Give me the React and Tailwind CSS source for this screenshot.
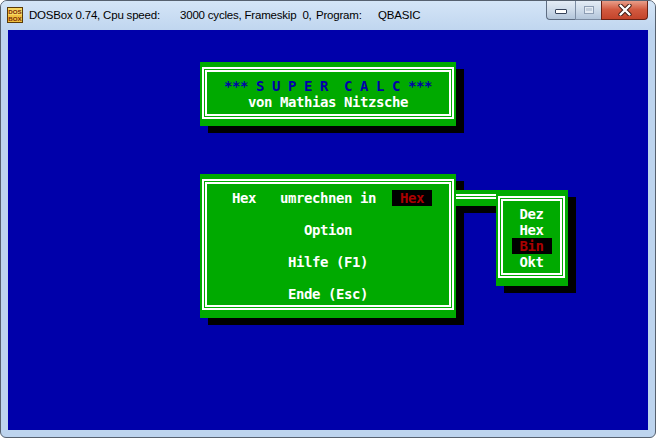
export default function App() {
  return (
    <div className="w-[656px] h-[438px] bg-white">
      <div className="box-border w-[656px] h-[438px] rounded-t-[7px] rounded-b-[6px] border border-[#56616f] bg-[#bdd4ee] flex flex-col overflow-hidden">
        <TitleBar />
        <div className="flex">
          <div className="w-[7px]" />
          <Screen />
        </div>
      </div>
    </div>
  );
}

function DosIcon() {
  return (
    <svg width="16" height="16" viewBox="0 0 16 16">
      <rect x="0.5" y="0.5" width="15" height="15" fill="#f0c040" stroke="#5a3a08" />
      <rect x="1" y="1" width="14" height="7" fill="#f7d660" />
      <text x="8" y="7" textAnchor="middle" fontSize="6.2" fontWeight="bold" fontFamily="'Liberation Sans', sans-serif" fill="#7a2a05">DOS</text>
      <text x="8" y="14" textAnchor="middle" fontSize="6.2" fontWeight="bold" fontFamily="'Liberation Sans', sans-serif" fill="#7a2a05">BOX</text>
    </svg>
  );
}

function TitleBar() {
  return (
    <div className="flex h-[29px] items-start bg-gradient-to-b from-[#d4e5f7] to-[#c0d6ef]">
      <div className="ml-[6px] mt-[6px] shrink-0">
        <DosIcon />
      </div>
      <div className="ml-[6px] mt-[6px] flex whitespace-pre text-[11.5px] leading-[16px] tracking-[-0.2px] text-black font-['Liberation_Sans',Arial,sans-serif]">
        <span className="w-[151px] shrink-0">DOSBox 0.74, Cpu speed:</span>
        <span className="w-[136px] shrink-0">3000 cycles, Frameskip  0,</span>
        <span className="w-[62px] shrink-0">Program:</span>
        <span className="shrink-0">QBASIC</span>
      </div>
      <div className="ml-auto mr-[7px] flex shrink-0">
        <div className="box-border w-[29px] h-[20px] -mt-px rounded-bl-[4px] border border-t-0 border-r-0 border-[#5e6d82] bg-gradient-to-b from-[#e6eef7] via-[#cfdcea] to-[#b3c5da] flex items-center justify-center">
          <div className="box-border w-[12px] h-[5px] mt-[3px] bg-white border border-[#36435a] rounded-[1px]" />
        </div>
        <div className="box-border w-[26px] h-[20px] -mt-px border-b border-l border-[#7d8da3] bg-gradient-to-b from-[#e6eef7] via-[#cfdcea] to-[#b3c5da] flex items-center justify-center">
          <div className="box-border w-[10px] h-[8px] border border-[#8d9db3] bg-[#e4ebf3] flex items-center justify-center">
            <div className="w-[6px] h-[3px] bg-[#c3cfdd]" />
          </div>
        </div>
        <div className="box-border w-[47px] h-[20px] -mt-px rounded-br-[4px] border border-t-0 border-[#6a2215] bg-gradient-to-b from-[#eaa592] via-[#d25a40] to-[#c4442b] flex items-center justify-center">
          <svg width="14" height="12" viewBox="0 0 14 12">
            <path d="M2.5 1.5 L11.5 10.5 M11.5 1.5 L2.5 10.5" stroke="#3a1a14" strokeWidth="4.2" strokeLinecap="round" />
            <path d="M2.5 1.5 L11.5 10.5 M11.5 1.5 L2.5 10.5" stroke="#ffffff" strokeWidth="2.4" strokeLinecap="round" />
          </svg>
        </div>
      </div>
    </div>
  );
}

function Row({ children, className }) {
  return <div className={"h-[16px] leading-[16px] whitespace-pre " + (className || "")}>{children}</div>;
}

function Screen() {
  return (
    <div className="w-[640px] h-[400px] bg-[#0000aa] overflow-hidden flex flex-col font-['DejaVu_Sans_Mono','Liberation_Mono',monospace] text-[14px] tracking-[-0.43px] font-bold text-white">
      {/* title box */}
      <div className="box-border ml-[192px] mt-[32px] h-[64px] w-[256px] bg-[#00aa00] pt-[5px] pb-[7px] px-[2px] shadow-[8px_7px_0_0_#000]">
        <div className="box-border h-full border-2 border-white p-px">
          <div className="box-border h-full border-2 border-white pt-[6px] flex flex-col items-center">
            <Row className="text-[#0000aa]">*** S U P E R  C A L C ***</Row>
            <Row>von Mathias Nitzsche</Row>
          </div>
        </div>
      </div>

      {/* main menu row */}
      <div className="flex items-start mt-[48px]">
        <div className="box-border ml-[192px] w-[256px] h-[144px] bg-[#00aa00] pt-[5px] pb-[8px] px-[2px] shadow-[8px_7px_0_0_#000]">
          <div className="box-border h-full border-2 border-white p-px">
            <div className="box-border h-full border-2 border-white pt-[6px] flex flex-col items-center gap-[16px]">
              <Row className="self-start ml-[25px]">
                {"Hex   umrechnen in  "}
                <span className="bg-black text-[#aa0000]">{" Hex "}</span>
              </Row>
              <Row>Option</Row>
              <Row>Hilfe (F1)</Row>
              <Row>Ende (Esc)</Row>
            </div>
          </div>
        </div>

        <div className="box-border w-[40px] h-[16px] mt-[16px] bg-[#00aa00] pt-[4px] shadow-[8px_7px_0_0_#000]">
          <div className="box-border h-[5px] border-y-2 border-white" />
        </div>

        <div className="box-border w-[72px] h-[96px] mt-[16px] bg-[#00aa00] pt-[6px] pb-[8px] pl-[2px] pr-[3px] shadow-[8px_7px_0_0_#000]">
          <div className="box-border h-full border-2 border-white p-px">
            <div className="box-border h-full border-2 border-white pt-[5px] flex flex-col items-center">
              <Row>Dez</Row>
              <Row>Hex</Row>
              <Row className="w-[40px] text-center bg-black text-[#aa0000]">Bin</Row>
              <Row>Okt</Row>
            </div>
          </div>
        </div>
      </div>
    </div>
  );
}
